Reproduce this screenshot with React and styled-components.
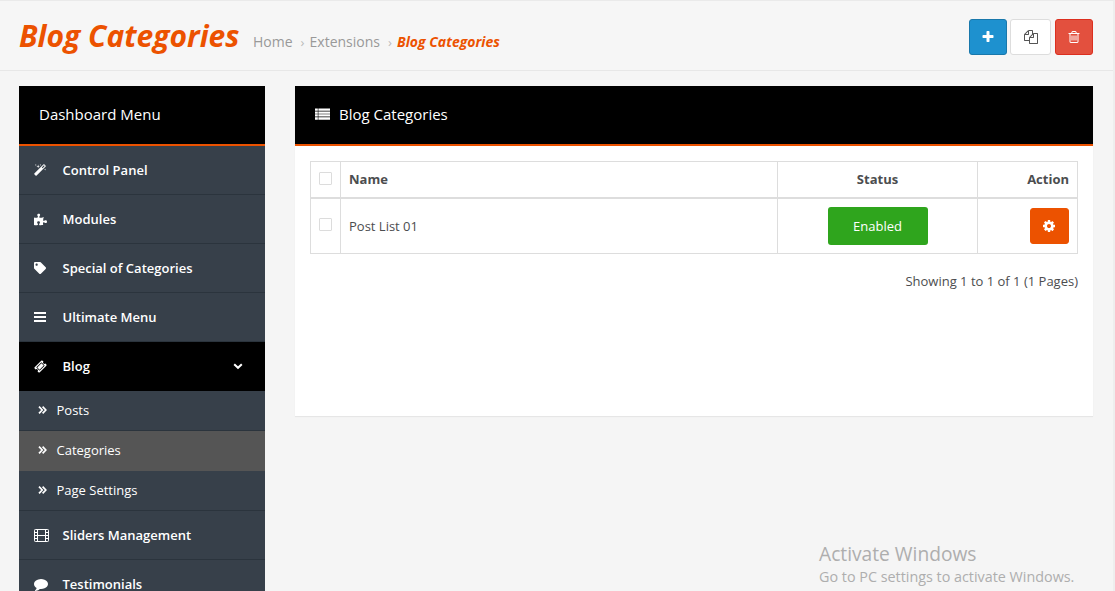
import React from 'react';
import styled, { createGlobalStyle, css } from 'styled-components';
import { FaPuzzlePiece, FaTag } from 'react-icons/fa';

const ORANGE = '#ec5200';

const GlobalStyle = createGlobalStyle`
  * { box-sizing: border-box; }
  html, body { margin: 0; padding: 0; height: 100%; overflow: hidden; }
  body {
    background: #f5f5f5;
    font-family: "Open Sans", "Noto Sans", sans-serif;
    font-size: 13px;
    color: #4c4d4f;
  }
`;

const Page = styled.div`
  height: 591px;
  overflow: hidden;
  display: flex;
  flex-direction: column;
  border-top: 1px solid #eaeaea;
  border-right: 2px solid #eeeeee;
`;

const Header = styled.header`
  height: 70px;
  flex: none;
  display: flex;
  justify-content: space-between;
  align-items: flex-start;
  padding: 18px 20px 0 19px;
  background: #f6f6f6;
  border-bottom: 1px solid #e7e7e7;
`;

const TitleGroup = styled.div`
  display: flex;
  align-items: baseline;
  white-space: nowrap;
`;

const Title = styled.h1`
  margin: -4px 14px 0 0;
  font-size: 30px;
  line-height: 41px;
  font-weight: 700;
  font-style: italic;
  color: ${ORANGE};
  width: 220px;
`;

const Crumbs = styled.nav`
  display: flex;
  align-items: baseline;
  font-size: 14px;
  line-height: 20px;
`;

const Crumb = styled.a`
  color: ${(p) => (p.$current ? ORANGE : '#999')};
  ${(p) => p.$current && css`font-weight: 700; font-style: italic;`}
`;

const Separator = styled.span`
  width: 17px;
  padding-left: 8px;
  color: #bbb;
  font-size: 13px;
`;

const Actions = styled.div`
  display: flex;
`;

const tones = {
  primary: css`background: #1e91cf; border-color: #1978ab; color: #fff; width: 38px;`,
  plain: css`background: #fff; border-color: #ddd; color: #555; width: 41px; margin: 0 4px 0 3px;`,
  danger: css`background: #e3503e; border-color: #dc2f1f; color: #fff; width: 38px;`,
  settings: css`background: ${ORANGE}; border-color: ${ORANGE}; color: #fff; width: 39px; padding-right: 1px;`,
};

const IconButton = styled.button`
  height: 36px;
  padding: 0;
  border: 1px solid;
  border-radius: 3px;
  display: inline-flex;
  align-items: center;
  justify-content: center;
  ${(p) => tones[p.$tone]}
`;

const Columns = styled.main`
  display: flex;
  align-items: flex-start;
  gap: 30px;
  padding: 15px 20px 0 19px;
`;

const Sidebar = styled.aside`
  width: 246px;
  flex: none;
  background: #37404a;
  color: #fff;
`;

const PanelHeading = styled.div`
  height: 60px;
  display: flex;
  align-items: center;
  gap: 9px;
  padding: 0 20px 2px;
  background: #000;
  border-bottom: 2px solid ${ORANGE};
  color: #fff;
  font-size: 15px;
`;

const MenuItem = styled.div`
  height: 49px;
  display: flex;
  align-items: center;
  padding: 0 22px 0 15px;
  font-weight: 600;
  border-bottom: 1px solid ${(p) => (p.$active ? '#000' : '#2b343d')};
  background: ${(p) => (p.$active ? '#000' : 'transparent')};
`;

const MenuIcon = styled.span`
  width: 28.5px;
  display: flex;
  align-items: center;
`;

const MenuLabel = styled.span`
  flex: 1;
`;

const SubItem = styled.div`
  height: 40px;
  display: flex;
  align-items: center;
  gap: 9.5px;
  padding: 0 0 1px 19px;
  border-bottom: 1px solid ${(p) => (p.$active ? '#555' : '#2b343d')};
  background: ${(p) => (p.$active ? '#555' : 'transparent')};
`;

const Panel = styled.section`
  flex: 1;
  height: 330px;
  background: #fff;
  box-shadow: 0 1px 1px rgba(0, 0, 0, 0.06);
`;

const PanelBody = styled.div`
  padding: 15px 15px 0 15px;
`;

const Table = styled.div`
  width: 768px;
  border: 1px solid #ddd;
`;

const Row = styled.div`
  display: grid;
  grid-template-columns: 30px 437px 200px 99px;
  height: ${(p) => (p.$head ? 37 : 54)}px;
  ${(p) => p.$head && css`border-bottom: 2px solid #ddd; font-weight: 700;`}
`;

const Cell = styled.div`
  display: flex;
  align-items: center;
  justify-content: ${(p) => p.$align || 'flex-start'};
  padding: 0 8px ${(p) => (p.$lift ? 2 : 0)}px;
  border-right: ${(p) => (p.$last ? 0 : 1)}px solid #ddd;
`;

const Checkbox = styled.span`
  width: 13px;
  height: 13px;
  flex: none;
  border: 1px solid #dcdcdc;
  border-radius: 1px;
  margin-top: -3px;
`;

const StatusButton = styled.button`
  width: 100px;
  height: 38px;
  padding: 0;
  border: 0;
  border-radius: 3px;
  background: #2fa51d;
  color: #fff;
  font: inherit;
`;

const Summary = styled.div`
  margin-top: 18px;
  line-height: 19px;
  text-align: right;
`;

const Watermark = styled.div`
  position: absolute;
  left: 819px;
  top: 541px;
  color: #aeaeae;
  white-space: nowrap;
`;

const WatermarkTitle = styled.div`
  font-size: 19.2px;
  line-height: 26px;
`;

const WatermarkText = styled.div`
  font-size: 14.35px;
  line-height: 20px;
`;

const Glyph = ({ w = 14, h = w, box = '0 0 1792 1792', d }) => (
  <svg width={w} height={h} viewBox={box} fill="currentColor">
    <path d={d} />
  </svg>
);

const paths = {
  plus: 'M1600 736v192q0 40-28 68t-68 28h-416v416q0 40-28 68t-68 28h-192q-40 0-68-28t-28-68v-416h-416q-40 0-68-28t-28-68v-192q0-40 28-68t68-28h416v-416q0-40 28-68t68-28h192q40 0 68 28t28 68v416h416q40 0 68 28t28 68z',
  copy: 'M1696 384q40 0 68 28t28 68v1216q0 40-28 68t-68 28h-960q-40 0-68-28t-28-68v-288h-544q-40 0-68-28t-28-68v-672q0-40 20-88t48-76l408-408q28-28 76-48t88-20h416q40 0 68 28t28 68v328q68-40 128-40h416zm-544 213l-299 299h299v-299zm-640-384l-299 299h299v-299zm196 647l316-316v-416h-384v416q0 40-28 68t-68 28h-416v640h512v-256q0-40 20-88t48-76zm956 804v-1152h-384v416q0 40-28 68t-68 28h-416v640h896z',
  trash: 'M704 736v576q0 14-9 23t-23 9h-64q-14 0-23-9t-9-23v-576q0-14 9-23t23-9h64q14 0 23 9t9 23zm256 0v576q0 14-9 23t-23 9h-64q-14 0-23-9t-9-23v-576q0-14 9-23t23-9h64q14 0 23 9t9 23zm256 0v576q0 14-9 23t-23 9h-64q-14 0-23-9t-9-23v-576q0-14 9-23t23-9h64q14 0 23 9t9 23zm128 724v-948h-896v948q0 22 7 40.5t14.5 27 10.5 8.5h832q3 0 10.5-8.5t14.5-27 7-40.5zm-672-1076h448l-48-117q-7-9-17-11h-317q-10 2-17 11zm928 32v64q0 14-9 23t-23 9h-96v948q0 83-47 143.5t-113 60.5h-832q-66 0-113-58.5t-47-141.5v-952h-96q-14 0-23-9t-9-23v-64q0-14 9-23t23-9h309l70-167q15-37 54-63t79-26h320q40 0 79 26t54 63l70 167h309q14 0 23 9t9 23z',
  cog: 'M1152 896q0-106-75-181t-181-75-181 75-75 181 75 181 181 75 181-75 75-181zm512-109v222q0 12-8 23t-20 13l-185 28q-19 54-39 91 35 50 107 138 10 12 10 25t-9 23q-27 37-99 108t-94 71q-12 0-26-9l-138-108q-44 23-91 38-16 136-29 186-7 28-36 28h-222q-14 0-24.5-8.5t-11.5-21.5l-28-184q-49-16-90-37l-141 107q-10 9-25 9-14 0-25-11-126-114-165-168-7-10-7-23 0-12 8-23 15-21 51-66.5t54-70.5q-27-50-41-99l-183-27q-13-2-21-12.5t-8-23.5v-222q0-12 8-23t19-13l186-28q14-46 39-92-40-57-107-138-10-12-10-24 0-10 9-23 26-36 98.5-107.5t94.5-71.5q13 0 26 10l138 107q44-23 91-38 16-136 29-186 7-28 36-28h222q14 0 24.5 8.5t11.5 21.5l28 184q49 16 90 37l142-107q9-9 24-9 13 0 25 10 129 119 165 170 7 8 7 22 0 12-8 23-15 21-51 66.5t-54 70.5q26 50 41 98l183 28q13 2 21 12.5t8 23.5z',
  magic: 'M1190 581l293-293-107-107-293 293zm447-293q0 27-18 45l-1286 1286q-18 18-45 18t-45-18l-198-198q-18-18-18-45t18-45l1286-1286q18-18 45-18t45 18l198 198q18 18 18 45zm-1351-190l98 30-98 30-30 98-30-98-98-30 98-30 30-98zm350 162l196 60-196 60-60 196-60-196-196-60 196-60 60-196zm930 478l98 30-98 30-30 98-30-98-98-30 98-30 30-98zm-640-640l98 30-98 30-30 98-30-98-98-30 98-30 30-98z',
  ticket: 'M1024 452l316 316-572 572-316-316zm-211 979l618-618q19-19 19-45t-19-45l-362-362q-18-18-45-18t-45 18l-618 618q-19 19-19 45t19 45l362 362q18 18 45 18t45-18zm889-637l-907 908q-37 37-90.5 37t-90.5-37l-126-125q56-56 56-136t-56-136-136-56-136 56l-125-126q-37-37-37-90.5t37-90.5l907-906q37-37 90.5-37t90.5 37l125 125q-56 56-56 136t56 136 136 56 136-56l126 125q37 37 37 90.5t-37 90.5z',
  comment: 'M1792 896q0 174-120 321.5t-326 233-450 85.5q-70 0-145-8-198 175-460 242-49 14-114 22-17 2-30.5-9t-17.5-29v-1q-3-4-.5-12t2-10 4.5-9.5l6-9 7-8.5 8-9q7-8 31-34.5t34.5-38 31-39.5 32.5-51 27-59 26-76q-157-89-247.5-220t-90.5-281q0-130 71-248.5t191-204.5 286-136.5 348-50.5q244 0 450 85.5t326 233 120 321.5z',
  bars: 'M0 0h12v2H0zM0 4h12v2H0zM0 8h12v2H0z',
  list: 'M0 0h3v2.6H0zM3.6 0H16v2.6H3.6zM0 3.2h3v2.4H0zM3.6 3.2H16v2.4H3.6zM0 6.3h3v2.4H0zM3.6 6.3H16v2.4H3.6zM0 9.4h3V12H0zM3.6 9.4H16V12H3.6z',
};

const FilmIcon = () => (
  <svg width="15" height="13" viewBox="0 0 15 13" fill="none" stroke="currentColor">
    <rect x="0.5" y="0.5" width="14" height="12" rx="0.8" />
    <path d="M3.5 1v11M11.5 1v11M3.5 6.5h8" />
    <path d="M1 3.5h2M1 6.5h2M1 9.5h2M12 3.5h2M12 6.5h2M12 9.5h2" />
  </svg>
);

const ChevronDown = () => (
  <svg width="10" height="7" viewBox="0 0 10 7" fill="none" stroke="currentColor" strokeWidth="2">
    <path d="M1.2 1.2L5 4.8l3.8-3.6" />
  </svg>
);

const DoubleChevron = () => (
  <svg width="9" height="8" viewBox="0 0 9 8" fill="none" stroke="currentColor" strokeWidth="1.7">
    <path d="M1 .6L4.2 4 1 7.4M4.6.6L7.8 4 4.6 7.4" />
  </svg>
);

const topItems = [
  { label: 'Control Panel', icon: <Glyph w={12} box="0 0 1664 1664" d={paths.magic} /> },
  { label: 'Modules', icon: <FaPuzzlePiece size={13} /> },
  { label: 'Special of Categories', icon: <FaTag size={12} /> },
  { label: 'Ultimate Menu', icon: <Glyph w={12} h={10} box="0 0 12 10" d={paths.bars} /> },
];

const bottomItems = [
  { label: 'Sliders Management', icon: <FilmIcon /> },
  { label: 'Testimonials', icon: <Glyph d={paths.comment} /> },
];

const Item = ({ label, icon, active }) => (
  <MenuItem $active={active}>
    <MenuIcon>{icon}</MenuIcon>
    <MenuLabel>{label}</MenuLabel>
    {active && <ChevronDown />}
  </MenuItem>
);

export default function App() {
  return (
    <>
      <GlobalStyle />
      <Page>
        <Header>
          <TitleGroup>
            <Title>Blog Categories</Title>
            <Crumbs>
              <Crumb>Home</Crumb>
              <Separator>›</Separator>
              <Crumb>Extensions</Crumb>
              <Separator>›</Separator>
              <Crumb $current>Blog Categories</Crumb>
            </Crumbs>
          </TitleGroup>
          <Actions>
            <IconButton $tone="primary"><Glyph d={paths.plus} /></IconButton>
            <IconButton $tone="plain"><Glyph d={paths.copy} /></IconButton>
            <IconButton $tone="danger"><Glyph w={14} d={paths.trash} /></IconButton>
          </Actions>
        </Header>
        <Columns>
          <Sidebar>
            <PanelHeading>Dashboard Menu</PanelHeading>
            {topItems.map((item) => <Item key={item.label} {...item} />)}
            <Item label="Blog" icon={<Glyph w={13} d={paths.ticket} />} active />
            {['Posts', 'Categories', 'Page Settings'].map((label) => (
              <SubItem key={label} $active={label === 'Categories'}>
                <DoubleChevron />
                {label}
              </SubItem>
            ))}
            {bottomItems.map((item) => <Item key={item.label} {...item} />)}
          </Sidebar>
          <Panel>
            <PanelHeading>
              <Glyph w={15} h={12} box="0 0 16 12" d={paths.list} />
              Blog Categories
            </PanelHeading>
            <PanelBody>
              <Table>
                <Row $head>
                  <Cell><Checkbox /></Cell>
                  <Cell $lift>Name</Cell>
                  <Cell $align="center" $lift>Status</Cell>
                  <Cell $align="flex-end" $lift $last>Action</Cell>
                </Row>
                <Row>
                  <Cell><Checkbox /></Cell>
                  <Cell>Post List 01</Cell>
                  <Cell $align="center"><StatusButton>Enabled</StatusButton></Cell>
                  <Cell $align="flex-end" $last>
                    <IconButton $tone="settings"><Glyph d={paths.cog} /></IconButton>
                  </Cell>
                </Row>
              </Table>
              <Summary>Showing 1 to 1 of 1 (1 Pages)</Summary>
            </PanelBody>
          </Panel>
        </Columns>
      </Page>
      <Watermark>
        <WatermarkTitle>Activate Windows</WatermarkTitle>
        <WatermarkText>Go to PC settings to activate Windows.</WatermarkText>
      </Watermark>
    </>
  );
}
